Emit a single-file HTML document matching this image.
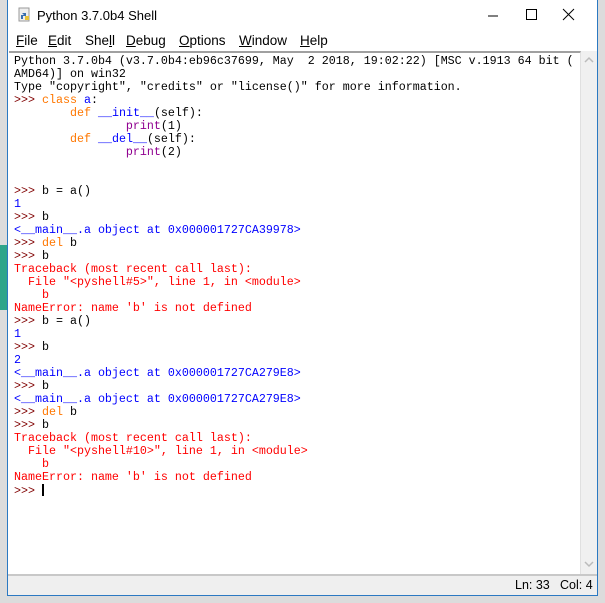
<!DOCTYPE html>
<html><head><style>
body{margin:0;width:605px;height:603px;background:#dcdcdc;position:relative;overflow:hidden;font-family:"Liberation Sans",sans-serif}
#win{position:absolute;left:7px;top:0;width:589px;height:595px;background:#fff;border:1px solid #2b79c2;border-top:none;box-sizing:content-box}
#title{position:absolute;left:0;top:0;height:30px;width:100%;font-size:13px;color:#000}
#title .t{position:absolute;left:29px;top:8px}
#menu{position:absolute;top:33px;left:0;font-size:13.5px;width:100%;height:16px}
#menu span{position:absolute;top:0}
#menu u{text-decoration:underline}
#text{position:absolute;left:1px;top:51px;width:571px;height:523px;border-top:2px solid #a0a0a0;border-right:1px solid #e0e0e0;}
pre{margin:0;position:absolute;left:5px;top:2px;font-family:"Liberation Mono",monospace;font-size:11.67px;line-height:13px;color:#000}
.p{color:#800000}.k{color:#ff7700}.d{color:#0000ff}.b{color:#900090}.o{color:#0000ff}.e{color:#ff0000}
#sb{position:absolute;left:573px;top:51px;width:16px;height:523px;background:#f0f0f0}
#status{position:absolute;left:0;top:574px;width:589px;height:21px;background:#efefef;border-top:2px solid #c8c8c8;box-sizing:border-box;font-size:12.5px}
</style></head><body>
<div style="position:absolute;left:0;top:245px;width:7px;height:65px;background:#2ea58a"></div>
<div id="win">
<div id="title">
<svg style="position:absolute;left:9px;top:7px" width="16" height="16"><rect x="2" y="1" width="10" height="13" fill="#eee" stroke="#999"/><path d="M5 6h4v3H6v3H4V8h3" fill="#3a6fb0"/><path d="M8 9h4v4H8z" fill="#e7c33a"/></svg>
<span class="t">Python 3.7.0b4 Shell</span>
<svg style="position:absolute;left:475px;top:8px" width="110" height="14"><path d="M5 8h10" stroke="#000"/><rect x="43.5" y="1.5" width="10" height="10" fill="none" stroke="#000"/><path d="M80 1l11 11M91 1L80 12" stroke="#000"/></svg>
</div>
<div id="menu"><span style="left:8px"><u>F</u>ile</span><span style="left:40px"><u>E</u>dit</span><span style="left:77px">She<u>l</u>l</span><span style="left:118px"><u>D</u>ebug</span><span style="left:171px"><u>O</u>ptions</span><span style="left:231px"><u>W</u>indow</span><span style="left:292px"><u>H</u>elp</span></div>
<div id="text"><pre>Python 3.7.0b4 (v3.7.0b4:eb96c37699, May  2 2018, 19:02:22) [MSC v.1913 64 bit (
AMD64)] on win32
Type "copyright", "credits" or "license()" for more information.
<span class="p">&gt;&gt;&gt; </span><span class="k">class</span> <span class="d">a</span>:
        <span class="k">def</span> <span class="d">__init__</span>(self):
                <span class="b">print</span>(1)
        <span class="k">def</span> <span class="d">__del__</span>(self):
                <span class="b">print</span>(2)


<span class="p">&gt;&gt;&gt; </span>b = a()
<span class="o">1</span>
<span class="p">&gt;&gt;&gt; </span>b
<span class="o">&lt;__main__.a object at 0x000001727CA39978&gt;</span>
<span class="p">&gt;&gt;&gt; </span><span class="k">del</span> b
<span class="p">&gt;&gt;&gt; </span>b
<span class="e">Traceback (most recent call last):
  File "&lt;pyshell#5&gt;", line 1, in &lt;module&gt;
    b
NameError: name 'b' is not defined</span>
<span class="p">&gt;&gt;&gt; </span>b = a()
<span class="o">1</span>
<span class="p">&gt;&gt;&gt; </span>b
<span class="o">2
&lt;__main__.a object at 0x000001727CA279E8&gt;</span>
<span class="p">&gt;&gt;&gt; </span>b
<span class="o">&lt;__main__.a object at 0x000001727CA279E8&gt;</span>
<span class="p">&gt;&gt;&gt; </span><span class="k">del</span> b
<span class="p">&gt;&gt;&gt; </span>b
<span class="e">Traceback (most recent call last):
  File "&lt;pyshell#10&gt;", line 1, in &lt;module&gt;
    b
NameError: name 'b' is not defined</span>
<span class="p">&gt;&gt;&gt; </span><span style="display:inline-block;width:2px;height:12px;background:#000;vertical-align:-2px"></span></pre></div>
<div id="sb"><svg width="16" height="523"><path d="M4 11l4-4 4 4" stroke="#bbb" fill="none" stroke-width="1.5"/><path d="M4 511l4 4 4-4" stroke="#bbb" fill="none" stroke-width="1.5"/></svg></div>
<div id="status"><span style="position:absolute;left:507px;top:2px">Ln: 33</span><span style="position:absolute;left:552px;top:2px">Col: 4</span></div>
</div>
</body></html>
